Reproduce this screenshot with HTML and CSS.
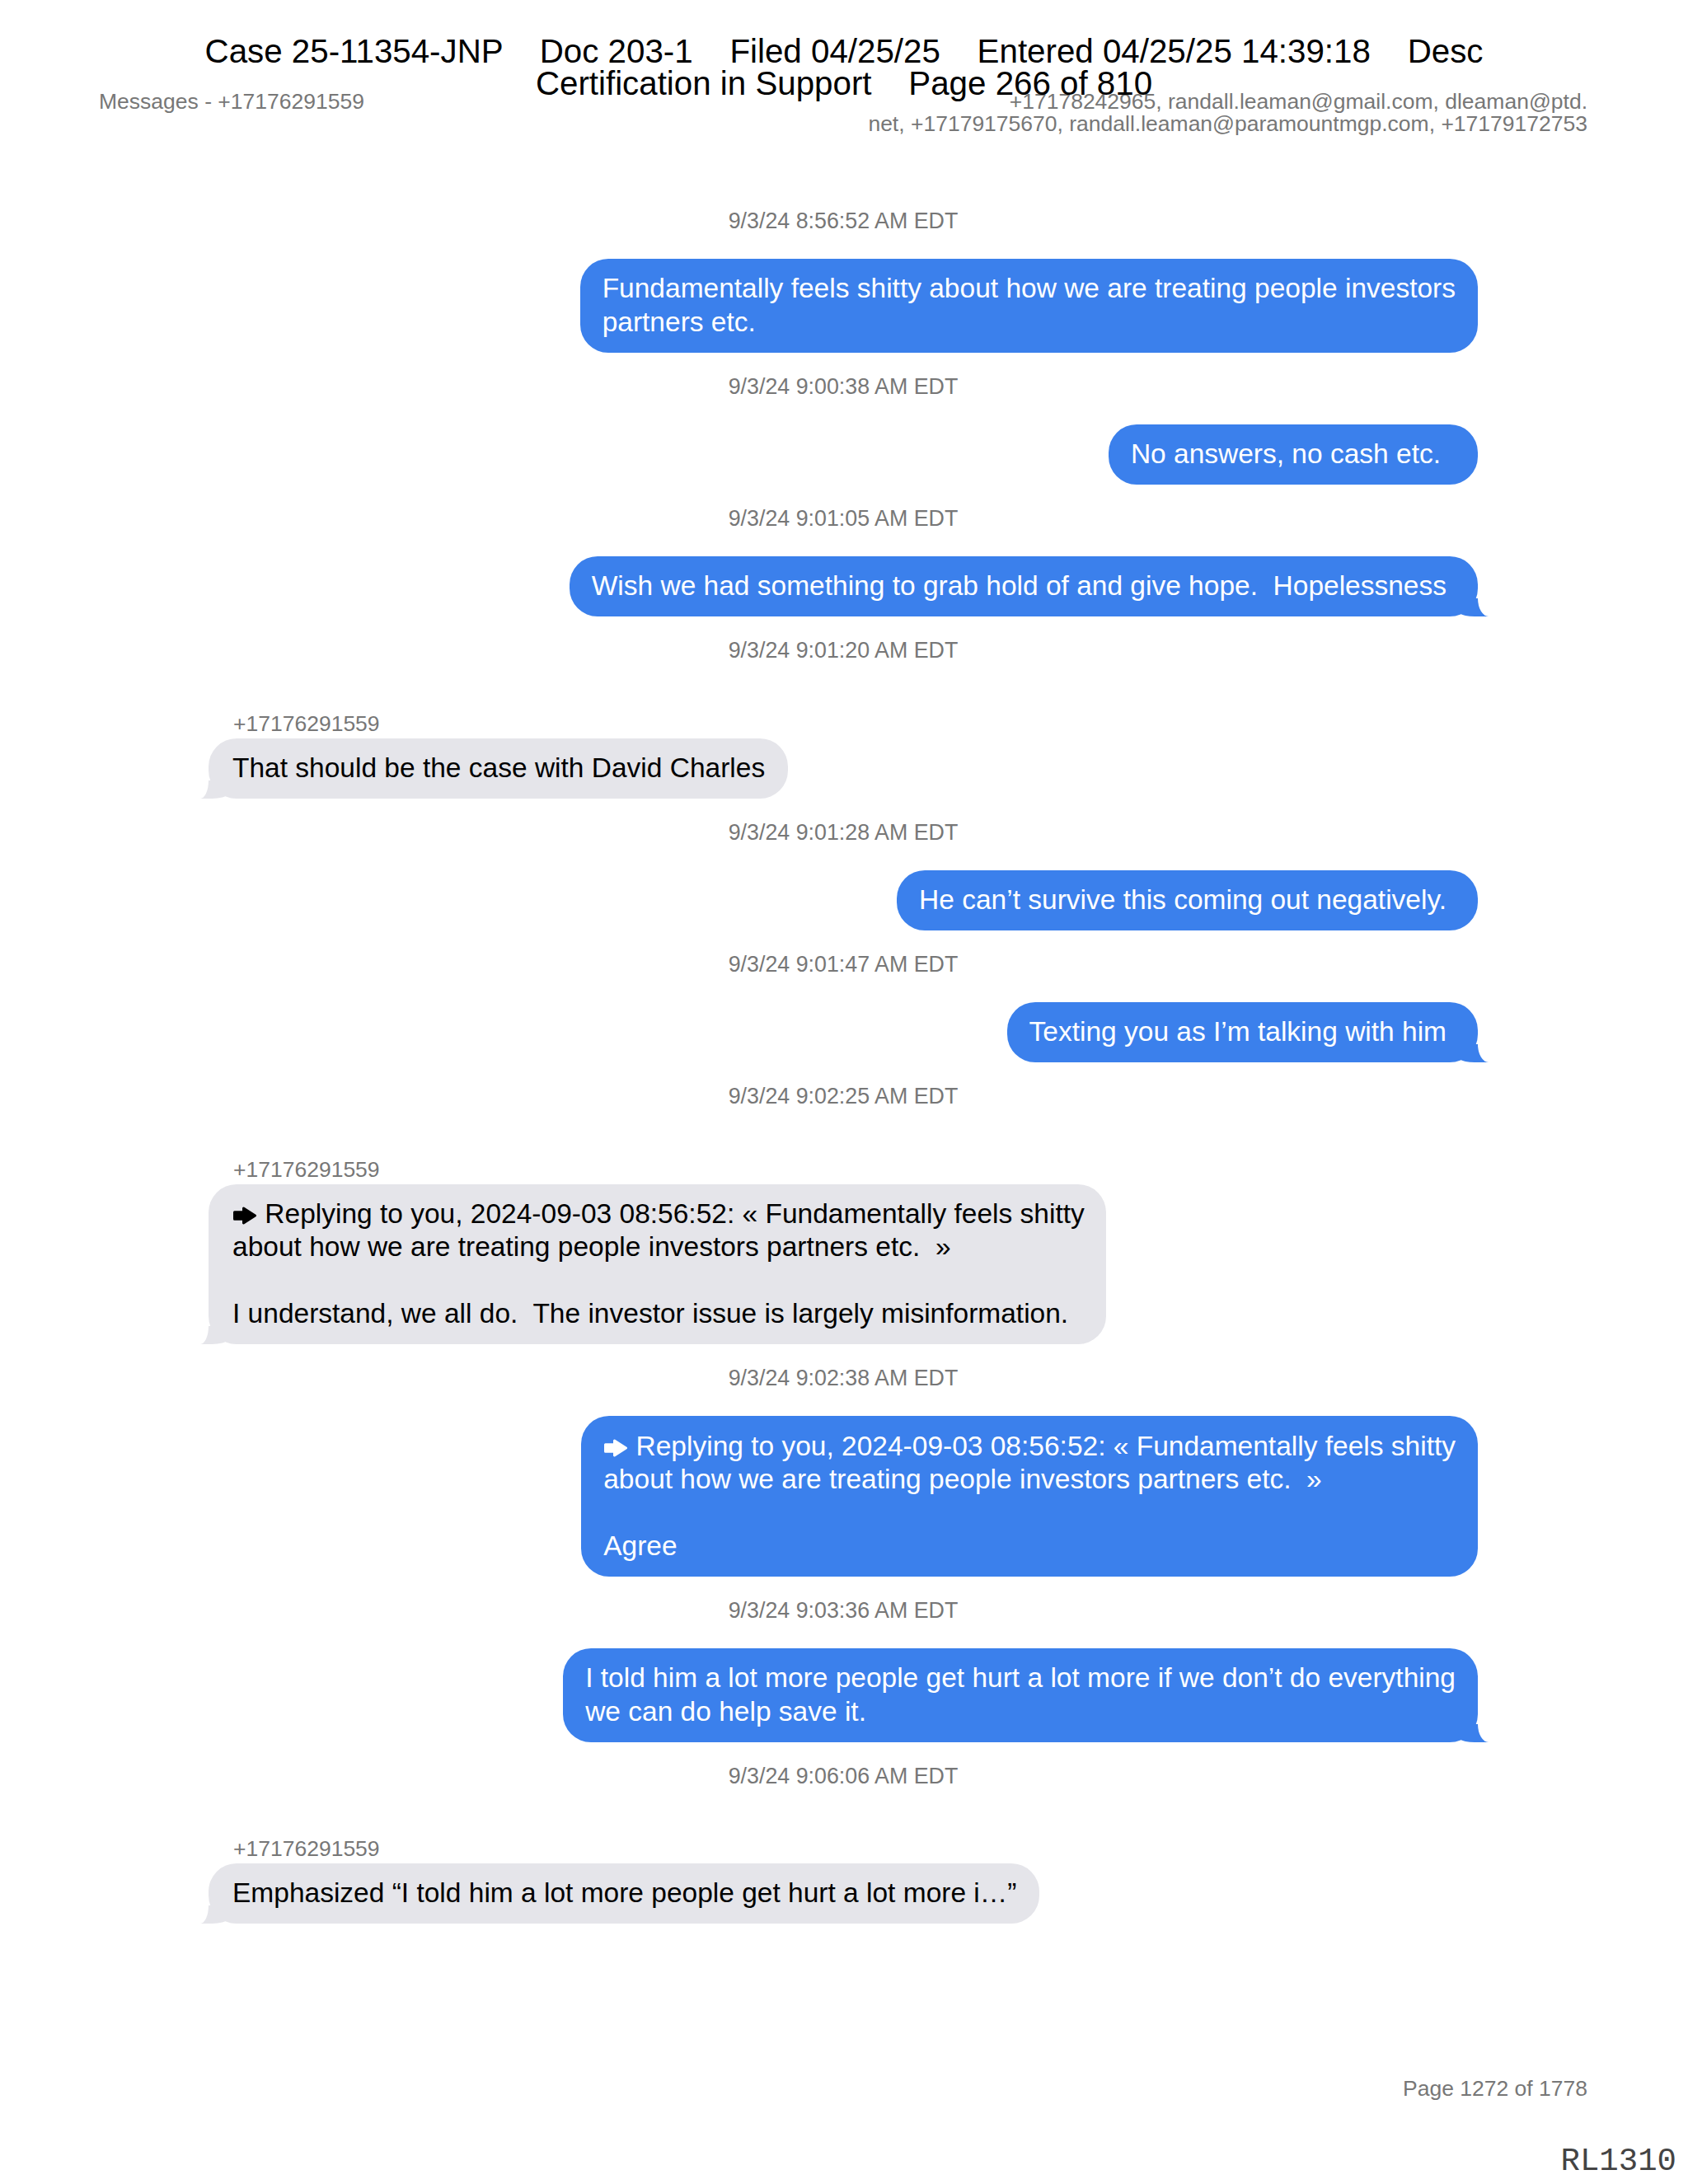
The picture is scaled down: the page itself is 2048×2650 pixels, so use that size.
FILE: index.html
```html
<!DOCTYPE html>
<html lang="en">
<head>
<meta charset="utf-8">
<title>Messages - +17176291559</title>
<link rel="stylesheet" href="styles.css">
</head>
<body>
<div class="page">
  <div class="stamp">Case 25-11354-JNP    Doc 203-1    Filed 04/25/25    Entered 04/25/25 14:39:18    Desc
Certification in Support    Page 266 of 810</div>

  <header class="doc-head">
    <div class="doc-title">Messages - +17176291559</div>
    <div class="participants">+17178242965, randall.leaman@gmail.com, dleaman@ptd.<br>net, +17179175670, randall.leaman@paramountmgp.com, +17179172753</div>
  </header>

  <main class="chat">
    <section class="entry sent">
      <div class="ts">9/3/24 8:56:52 AM EDT</div>
      <div class="bubble multi">Fundamentally feels shitty about how we are treating people investors<br>partners etc.</div>
    </section>

    <section class="entry sent">
      <div class="ts">9/3/24 9:00:38 AM EDT</div>
      <div class="bubble wide-pad">No answers, no cash etc.</div>
    </section>

    <section class="entry sent">
      <div class="ts">9/3/24 9:01:05 AM EDT</div>
      <div class="bubble tail">Wish we had something to grab hold of and give hope.&nbsp; Hopelessness</div>
    </section>

    <section class="entry recv">
      <div class="ts">9/3/24 9:01:20 AM EDT</div>
      <div class="sender">+17176291559</div>
      <div class="bubble tail">That should be the case with David Charles</div>
    </section>

    <section class="entry sent">
      <div class="ts">9/3/24 9:01:28 AM EDT</div>
      <div class="bubble">He can’t survive this coming out negatively.</div>
    </section>

    <section class="entry sent">
      <div class="ts">9/3/24 9:01:47 AM EDT</div>
      <div class="bubble tail">Texting you as I’m talking with him</div>
    </section>

    <section class="entry recv">
      <div class="ts">9/3/24 9:02:25 AM EDT</div>
      <div class="sender">+17176291559</div>
      <div class="bubble tail multi"><svg class="reply-icon" viewBox="0 0 30 22" aria-hidden="true"><path d="M2.5 6.8 H13.5 V2 L27.5 11 L13.5 20 V15.2 H2.5 Z" fill="currentColor" stroke="currentColor" stroke-width="3" stroke-linejoin="round"/></svg> Replying to you, 2024-09-03 08:56:52: « Fundamentally feels shitty<br>about how we are treating people investors partners etc.&nbsp; »<br><br>I understand, we all do.&nbsp; The investor issue is largely misinformation.</div>
    </section>

    <section class="entry sent">
      <div class="ts">9/3/24 9:02:38 AM EDT</div>
      <div class="bubble multi"><svg class="reply-icon" viewBox="0 0 30 22" aria-hidden="true"><path d="M2.5 6.8 H13.5 V2 L27.5 11 L13.5 20 V15.2 H2.5 Z" fill="currentColor" stroke="currentColor" stroke-width="3" stroke-linejoin="round"/></svg> Replying to you, 2024-09-03 08:56:52: « Fundamentally feels shitty<br>about how we are treating people investors partners etc.&nbsp; »<br><br>Agree</div>
    </section>

    <section class="entry sent">
      <div class="ts">9/3/24 9:03:36 AM EDT</div>
      <div class="bubble tail multi">I told him a lot more people get hurt a lot more if we don’t do everything<br>we can do help save it.</div>
    </section>

    <section class="entry recv">
      <div class="ts">9/3/24 9:06:06 AM EDT</div>
      <div class="sender">+17176291559</div>
      <div class="bubble tail">Emphasized “I told him a lot more people get hurt a lot more i…”</div>
    </section>
  </main>

  <footer class="page-num">Page 1272 of 1778</footer>
  <div class="bates">RL1310</div>
</div>
</body>
</html>
```

FILE: styles.css
```css
:root {
  --blue: #3b80ec;
  --gray-bubble: #e5e5ea;
  --meta: #777777;
}

html, body {
  margin: 0;
  padding: 0;
  background: #ffffff;
}

body {
  font-family: "Liberation Sans", Arial, sans-serif;
  color: #000000;
}

.page {
  position: relative;
  height: 2650px;
  box-sizing: border-box;
  padding: 110px 122px 101px 120px;
  display: flex;
  flex-direction: column;
}

/* court filing stamp, overlaid on the page */
.stamp {
  position: absolute;
  top: 42.5px;
  left: 0;
  right: 0;
  text-align: center;
  white-space: pre;
  font-size: 40.3px;
  line-height: 39.5px;
  color: #000000;
}

.doc-head {
  display: flex;
  justify-content: space-between;
  align-items: flex-start;
  font-size: 26.5px;
  line-height: 27px;
  color: var(--meta);
}

.participants {
  text-align: right;
}

.chat {
  margin: 89px 133px 0 133px;
  display: flex;
  flex-direction: column;
}

.entry {
  display: flex;
  flex-direction: column;
  margin-top: 26.2px;
}

.entry:first-child {
  margin-top: 0;
}

.ts {
  text-align: center;
  font-size: 26.8px;
  line-height: 30px;
  color: var(--meta);
  margin-bottom: 31px;
}

.sender {
  font-size: 26.5px;
  line-height: 30px;
  color: var(--meta);
  padding-left: 30px;
  margin-top: 27.5px;
  margin-bottom: 3px;
}

.bubble {
  position: relative;
  font-size: 33.5px;
  line-height: 40.5px;
  border-radius: 34px;
  padding: 16.25px 38px 16.25px 27px;
}

.sent .bubble {
  align-self: flex-end;
  background: var(--blue);
  color: #ffffff;
}

.recv .bubble {
  align-self: flex-start;
  background: var(--gray-bubble);
  color: #000000;
  padding-left: 29px;
  padding-right: 28px;
}

.sent .bubble.multi {
  padding-right: 27px;
}

.sent .bubble.wide-pad {
  padding-right: 45px;
}

.recv .bubble.multi {
  padding-right: 26px;
}

.reply-icon {
  width: 30px;
  height: 22px;
  vertical-align: -2px;
}

/* bubble tails */
.bubble.tail::before,
.bubble.tail::after {
  content: "";
  position: absolute;
  bottom: 0;
  height: 22px;
}

.sent .bubble.tail::before {
  right: -13px;
  width: 35px;
  background: var(--blue);
  border-bottom-left-radius: 18px 5px;
}

.sent .bubble.tail::after {
  right: -26px;
  width: 26px;
  background: #ffffff;
  border-bottom-left-radius: 13px 22px;
}

.recv .bubble.tail::before {
  left: -10px;
  width: 32px;
  background: var(--gray-bubble);
  border-bottom-right-radius: 18px 5px;
}

.recv .bubble.tail::after {
  left: -26px;
  width: 26px;
  background: #ffffff;
  border-bottom-right-radius: 10px 22px;
}

.page-num {
  margin-top: auto;
  text-align: right;
  font-size: 26.5px;
  line-height: 30px;
  color: var(--meta);
}

/* bates stamp, overlaid on the page */
.bates {
  position: absolute;
  top: 2604px;
  right: 14px;
  font-family: "Liberation Mono", "Courier New", monospace;
  font-size: 39px;
  line-height: 39px;
  color: #444444;
}
```
